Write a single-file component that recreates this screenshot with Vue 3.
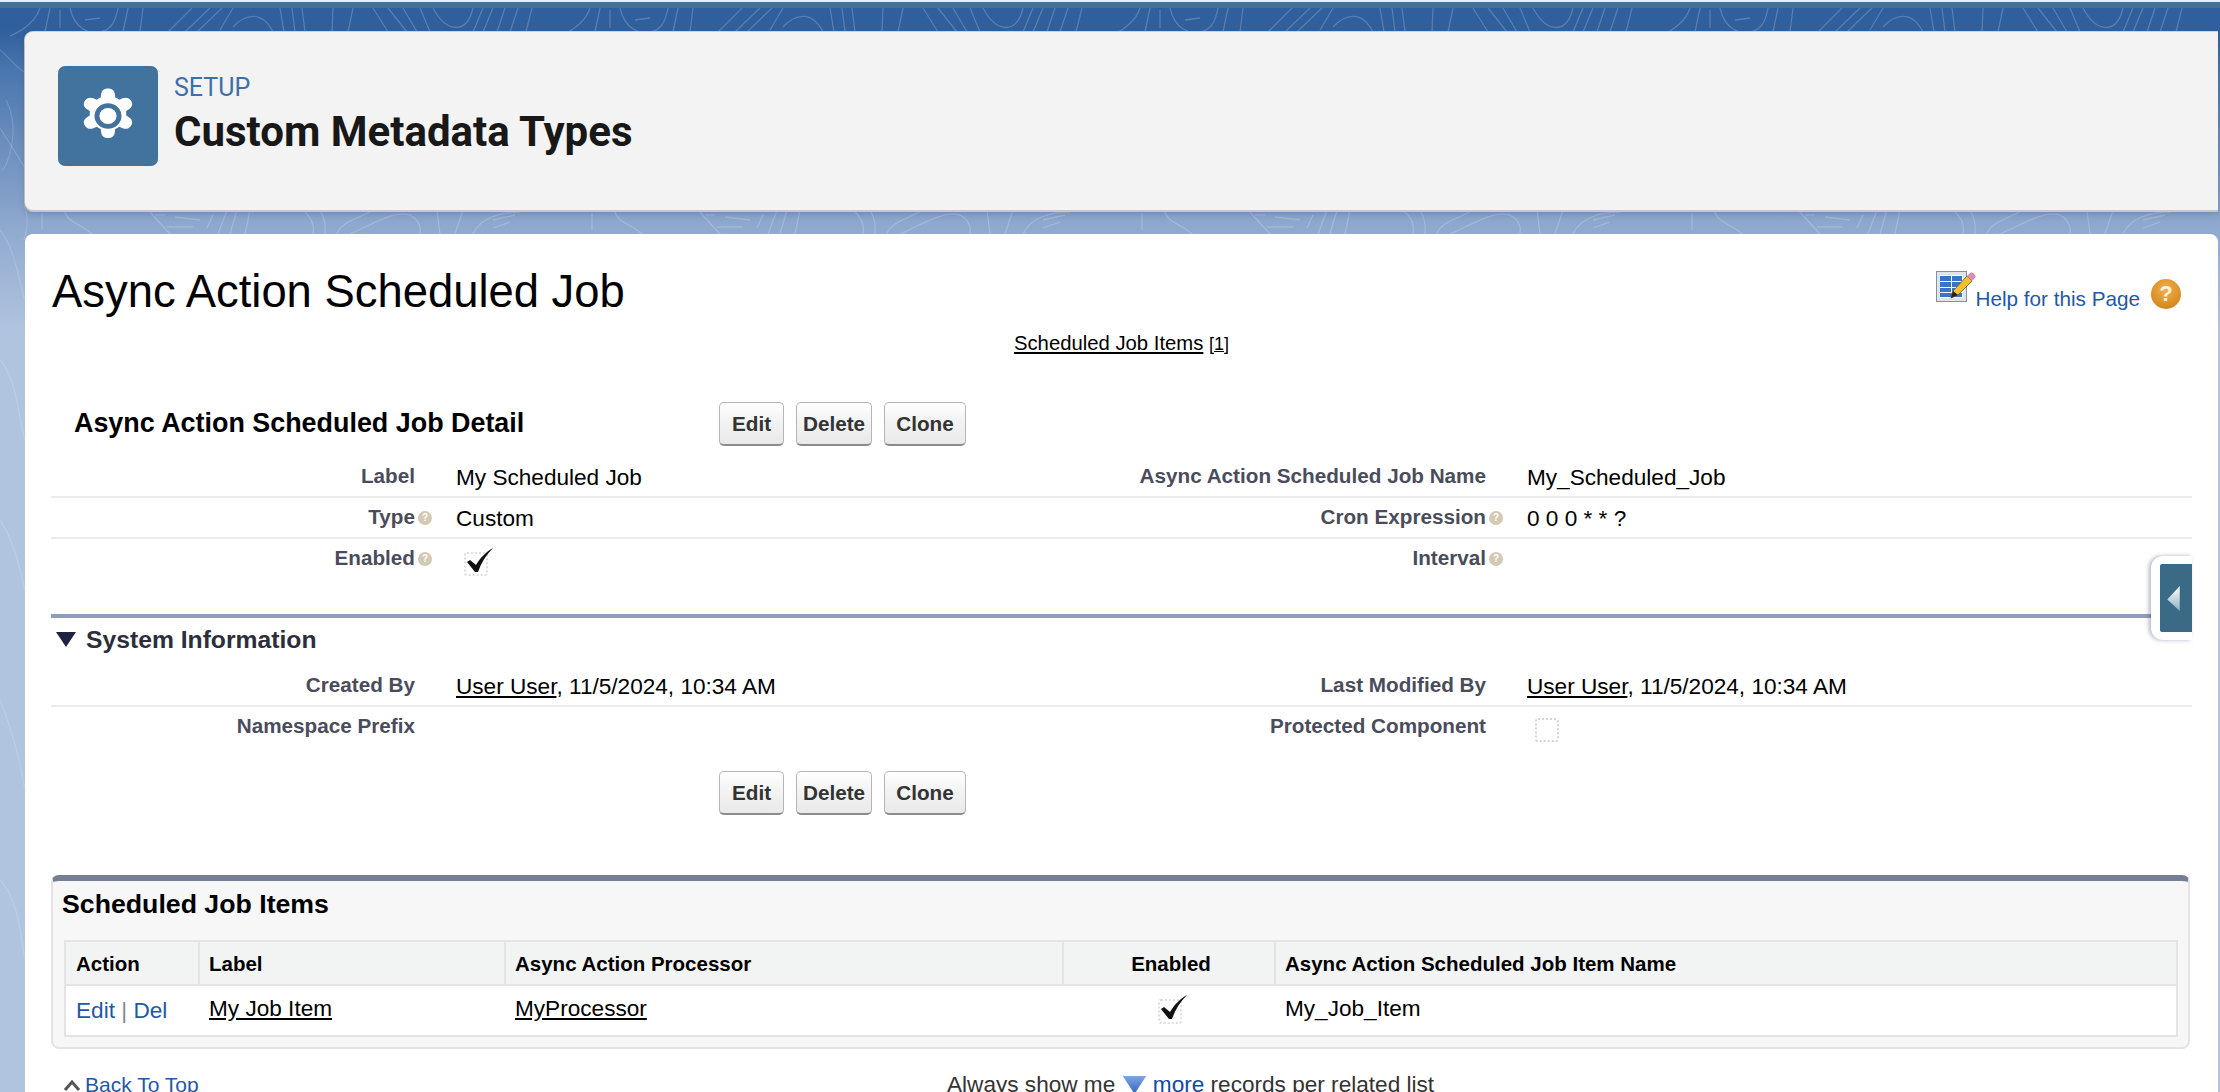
<script setup>
const firstRows = [
  { l: 'Label', v: 'My Scheduled Job', l2: 'Async Action Scheduled Job Name', v2: 'My_Scheduled_Job', line: true },
  { l: 'Type', orb: true, v: 'Custom', l2: 'Cron Expression', orb2: true, v2: '0 0 0 * * ?', line: true },
  { l: 'Enabled', orb: true, check: true, l2: 'Interval', orb2: true, v2: '', tall: true }
]
const tile = [
  'M40 8C36 20 24 30 10 36', 'M50 8L45 32', 'M60 10V28', 'M70 8C75 30 90 34 100 32S115 24 118 8', 'M85 20L100 18', 'M128 8L123 32', 'M143 8L140 32',
  'M192 8L168 32', 'M210 8L185 32', 'M222 8L197 32', 'M233 8L220 30', 'M233 27C245 14 262 10 273 32', 'M280 8L284 32', 'M292 8L295 32', 'M302 8L305 32',
  'M333 8L332 32', 'M353 8L348 32', 'M373 8L388 32', 'M388 8L407 32', 'M403 8L417 32', 'M420 8L430 32', 'M433 8C447 34 467 34 473 8', 'M483 8L473 32', 'M493 8L483 32', 'M505 8L497 32', 'M518 8L510 32', 'M532 8L526 32',
  'M65 212C67 222 83 225 92 234', 'M42 213V230', 'M148 210L170 234', 'M155 215H165', 'M175 217L200 220', 'M167 227H193', 'M213 215L207 228', 'M227 210L218 234', 'M237 210L230 234', 'M250 210L245 234',
  'M303 210C317 222 313 232 313 234', 'M320 210C327 222 325 232 325 234', 'M337 234C340 222 360 218 373 210', 'M350 234C377 222 393 211 410 215C423 222 420 232 420 234', 'M437 210L440 234', 'M463 210L455 234', 'M473 234C480 218 500 212 520 212', 'M493 220L515 215', 'M493 228L510 222'
]
const offsets = [0, 550, 1100, 1650]
const left = ['M0 50C12 60 18 70 25 72', 'M0 128C14 150 20 160 25 168', 'M0 230C16 250 18 280 25 300', 'M0 360C18 380 18 420 25 440', 'M0 520C14 540 20 570 25 590', 'M0 700C12 730 20 760 25 790', 'M0 880C18 900 20 930 25 960', 'M6 100C22 130 6 170 2 170', 'M24 205C30 220 26 232 24 240']
const checkPath = 'M3 17l3-2 6 5C16 13 22 7 29 3 22 10 17 18 14 27h-3z'
</script>

<template>
  <div class="page">
    <svg class="topo" width="2220" height="1092" viewBox="0 0 2220 1092" fill="none" aria-hidden="true">
      <g v-for="o in offsets" :key="o" :transform="`translate(${o} 0)`">
        <path v-for="(d, i) in tile" :key="i" :d="d" stroke="#fff" stroke-opacity=".2" stroke-width="1.3" />
      </g>
      <path v-for="(d, i) in left" :key="i" :d="d" stroke="#fff" stroke-opacity=".15" stroke-width="1.3" />
    </svg>
    <div class="topbar"></div>

    <header class="head">
      <div class="tile">
        <svg width="68" height="64" viewBox="0 0 58 58" preserveAspectRatio="none">
          <path fill="#fff" fill-rule="evenodd" d="M29 4c3.400 0 5.500 1.900 5.800 5l.4 3.300c1.200.4 2.300 1 3.300 1.900l3-1.300c2.900-1.200 5.600-.4 7.200 2.300 1.700 3 1 5.600-1.600 7.400l-2.700 2c.2 1.300.2 2.500 0 3.800l2.700 2c2.600 1.800 3.300 4.400 1.600 7.400-1.600 2.700-4.300 3.500-7.200 2.300l-3-1.300c-1 .9-2.100 1.500-3.300 1.900l-.4 3.300c-.3 3.100-2.400 5-5.800 5s-5.500-1.900-5.800-5l-.4-3.300c-1.200-.4-2.300-1-3.300-1.900l-3 1.300c-2.900 1.200-5.600.4-7.200-2.300-1.700-3-1-5.600 1.600-7.400l2.700-2c-.2-1.300-.2-2.500 0-3.800l-2.700-2c-2.600-1.800-3.300-4.400-1.600-7.400 1.600-2.700 4.300-3.500 7.200-2.300l3 1.300c1-.9 2.100-1.500 3.300-1.900l.4-3.300C23.500 5.900 25.600 4 29 4zM29 17.500a11.500 11.500 0 1 0 0 23 11.500 11.500 0 0 0 0-23z"/>
          <circle cx="29" cy="29" r="7.300" fill="#fff"/>
        </svg>
      </div>
      <div class="head-text">
        <div class="eyebrow">SETUP</div>
        <h1 class="app-title">Custom Metadata Types</h1>
      </div>
    </header>

    <main class="card">
      <div class="page-title-row">
        <h2 class="page-title">Async Action Scheduled Job</h2>
        <div class="help">
          <svg class="help-table" width="40" height="32" viewBox="0 0 40 32">
            <rect x="0.500" y="0.500" width="30" height="30" fill="#dfe3ea" stroke="#8b8f96"/>
            <rect x="4" y="4" width="23" height="23" fill="#fff"/>
            <path fill="#3b73c9" d="M4 5h11v5H4zM16 5h10v5H16zM4 11h11v5H4zM16 11h10v5H16zM4 17h11v4H4zM16 17h10v4H16zM4 22h22v4H4z"/>
            <path fill="#f0c030" stroke="#6b5a10" stroke-width=".8" d="M31 5l5 5-14 14-7 3 2-7z"/>
            <path fill="#d98fb5" d="M31 5l3-3c1-1 2-1 3 0l2 2c1 1 1 2 0 3l-3 3z"/>
            <path fill="#222" d="M17 20l5 4-7 3z"/>
          </svg>
          <a class="blue help-text">Help for this Page</a>
          <span class="help-orb">?</span>
        </div>
      </div>

      <div class="jump"><a class="link">Scheduled Job Items</a> <span class="count">[<u>1</u>]</span></div>

      <div class="detail-head">
        <h3 class="detail-title">Async Action Scheduled Job Detail</h3>
        <div class="btns"><button class="b-edit">Edit</button><button class="b-del">Delete</button><button class="b-clone">Clone</button></div>
      </div>

      <div class="rows-first">
        <div v-for="r in firstRows" :key="r.l" class="row" :class="{ line: r.line, tall: r.tall }">
          <div class="lab">{{ r.l }}<i v-if="r.orb" class="orb">?</i></div>
          <div class="val">
            <span v-if="r.check" class="check"><svg width="32" height="32" viewBox="0 0 32 32"><path fill="#111" :d="checkPath"/></svg></span>
            <template v-else>{{ r.v }}</template>
          </div>
          <div class="lab">{{ r.l2 }}<i v-if="r.orb2" class="orb">?</i></div>
          <div class="val">{{ r.v2 }}</div>
        </div>
      </div>

      <div class="section">
        <svg width="20" height="15" viewBox="0 0 20 15"><path fill="#1f2340" d="M0 0h20L10 15z"/></svg>
        <span>System Information</span>
      </div>

      <div class="row line">
        <div class="lab">Created By</div>
        <div class="val"><a class="link">User User</a>, 11/5/2024, 10:34 AM</div>
        <div class="lab">Last Modified By</div>
        <div class="val"><a class="link">User User</a>, 11/5/2024, 10:34 AM</div>
      </div>
      <div class="row">
        <div class="lab">Namespace Prefix</div>
        <div class="val"></div>
        <div class="lab">Protected Component</div>
        <div class="val"><span class="check empty"></span></div>
      </div>

      <div class="btns bottom"><button class="b-edit">Edit</button><button class="b-del">Delete</button><button class="b-clone">Clone</button></div>

      <section class="related">
        <h3 class="related-title">Scheduled Job Items</h3>
        <div class="tbl">
          <div class="th">Action</div><div class="th th-l">Label</div><div class="th th-l">Async Action Processor</div><div class="th th-c">Enabled</div><div class="th th-l">Async Action Scheduled Job Item Name</div>
          <div class="td"><a class="blue">Edit</a> <span class="pipe">|</span> <a class="blue">Del</a></div>
          <div class="td td-l"><a class="link">My Job Item</a></div>
          <div class="td td-l"><a class="link">MyProcessor</a></div>
          <div class="td td-c"><span class="check small"><svg width="32" height="32" viewBox="0 0 32 32"><path fill="#111" :d="checkPath"/></svg></span></div>
          <div class="td td-l">My_Job_Item</div>
        </div>
      </section>

      <footer class="foot">
        <div class="top-link">
          <svg width="18" height="12" viewBox="0 0 18 12"><path fill="none" stroke="#555" stroke-width="3" d="M2 11l7-8 7 8"/></svg>
          <a class="blue">Back To Top</a>
        </div>
        <div class="always">Always show me <svg width="25" height="18" viewBox="0 0 26 20"><defs><linearGradient id="mg" x1="0" y1="0" x2="0" y2="1"><stop offset="0" stop-color="#7fa6e0"/><stop offset="1" stop-color="#2f66c0"/></linearGradient></defs><path fill="url(#mg)" d="M0 0h26L13 20z"/></svg> <a class="blue dark">more</a> records per related list</div>
      </footer>

      <div class="handle"><div class="handle-in"><svg width="14" height="25" viewBox="0 0 14 26"><defs><linearGradient id="hg" x1="0" y1="0" x2="0" y2="1"><stop offset="0" stop-color="#fff"/><stop offset="1" stop-color="#8fb0c0"/></linearGradient></defs><path fill="url(#hg)" d="M13 0v26L0 14z"/></svg></div></div>
    </main>
  </div>
</template>

<style>
html, body { margin: 0; background: #b0c4df; }
</style>

<style scoped>
.page {
  position: relative;
  height: 1092px;
  overflow: hidden;
  padding: 32px 2px 0 25px;
  box-sizing: border-box;
  background: linear-gradient(180deg, #2f5f9d 0, #2f5f9d 30px, #4a76ae 70px, #8ea8ce 225px, #b0c4df 330px);
  font-family: "Liberation Sans", Arial, sans-serif;
  font-size: 20.7px;
  color: #000;
}
.topo { position: absolute; left: 0; top: 0; }
.topbar { position: absolute; left: 0; right: 0; top: 2px; height: 6px; background: #3f7199; }
.page::before { content: ""; position: absolute; left: 0; right: 0; top: 0; height: 2px; background: #e9edf2; }

.head {
  position: relative;
  display: flex;
  align-items: flex-start;
  gap: 16px;
  height: 178px;
  padding: 34px 33px 0;
  box-sizing: border-box;
  background: #f3f3f3;
  border-radius: 8px 0 0 8px;
  box-shadow: 0 -1px 0 #cfd2d6, 0 2px 0 #c4c7cb, 0 4px 6px rgba(40,60,90,.25), -1px 0 0 #cfd2d6;
}
.tile {
  width: 100px;
  height: 100px;
  border-radius: 7px;
  background: #41739e;
  display: flex;
  align-items: center;
  justify-content: center;
}
.head-text { padding-top: 5px; }
.eyebrow { font-family: Roboto, sans-serif; font-size: 25px; line-height: 34px; color: #3e70a8; }
.app-title { margin: 2px 0 0; font-family: Roboto, sans-serif; font-weight: 700; font-size: 42px; line-height: 50px; color: #181818; white-space: nowrap; }

.card {
  position: relative;
  margin-top: 24px;
  height: 858px;
  padding: 32px 26px 0 26px;
  box-sizing: border-box;
  background: #fff;
  border-radius: 8px 8px 0 0;
  overflow: hidden;
}
.page-title-row { display: flex; justify-content: space-between; align-items: flex-start; height: 64px; }
.page-title { margin: 0 0 0 1px; font-weight: 400; font-size: 45.4px; line-height: 52px; }
.help { display: flex; align-items: flex-start; padding: 5px 11px 0 0; height: 37px; }
.help-text { line-height: 24px; margin-top: 16px; }
.blue { color: #1f58a8; }
.blue.dark { color: #0f4aa8; }
.help-orb {
  display: inline-flex; align-items: center; justify-content: center;
  width: 30px; height: 30px; margin: 8px 0 0 11px; border-radius: 50%;
  background: radial-gradient(circle at 50% 35%, #f0b050, #d98a22 70%, #b87418);
  color: #fff3dc; font-weight: 700; font-size: 22px;
}
.jump { text-align: center; height: 30px; line-height: 30px; margin-top: -2px; font-size: 20.3px; }
.count { font-size: 18px; }
.link { color: #000; text-decoration: underline; }
.detail-head { display: flex; align-items: center; height: 44px; margin-top: 44px; }
.detail-title { margin: 0; width: 668px; padding-left: 23px; box-sizing: border-box; font-size: 26.9px; line-height: 42px; font-weight: 700; align-self: flex-start; }
.btns { display: flex; gap: 12px; }
button {
  height: 44px; padding: 0; box-sizing: border-box;
  font: 700 20.7px "Liberation Sans", Arial, sans-serif; color: #333;
  border: 1.500px solid #b5b5b5; border-bottom: 2px solid #8c8c8c; border-radius: 5px;
  background: linear-gradient(180deg, #fff, #f4f4f4 40%, #e9e9e9);
}
.b-edit { width: 65px; }
.b-del { width: 76px; }
.b-clone { width: 82px; }
.rows-first { margin-top: 11px; }
.row {
  display: grid;
  grid-template-columns: 364px 716px 355px 1fr;
  height: 41px;
  line-height: 41px;
  box-sizing: border-box;
}
.row.tall { height: 75px; }
.row.line { border-bottom: 2px solid #ececec; }
.lab { position: relative; text-align: right; font-weight: 700; color: #4a4c5c; line-height: 38px; }
.val { padding-left: 41px; white-space: nowrap; font-size: 22.6px; }
.orb {
  position: absolute; left: 100%; top: 13px; width: 14px; height: 14px; margin-left: 3px; border-radius: 50%;
  background: #d4c9b2; color: #fff; font: 700 10px/14px "Liberation Sans", sans-serif; text-align: center;
}
.check { display: inline-block; position: relative; width: 24px; height: 24px; margin: 13px 0 0 8px; box-sizing: border-box; border: 2px dotted #dedede; border-radius: 3px; vertical-align: top; }
.check svg { position: absolute; left: -2px; top: -9px; }
.check.empty { border-color: #d4d4d4; margin-top: 11px; }
.section {
  display: flex; align-items: flex-start; gap: 10px; height: 52px; padding-left: 5px; box-sizing: border-box;
  border-top: 4px solid #8e9dbd; font-weight: 700; font-size: 24.7px; line-height: 44px; color: #2c2e3c;
}
.section svg { margin-top: 14px; }
.bottom { padding-left: 668px; margin-top: 23px; }
.related {
  margin: 60px 2px 0 0; height: 174px; box-sizing: border-box;
  background: #f7f7f7; border: 2px solid #e4e4e4; border-top: 6px solid #767e96; border-radius: 8px;
  padding: 0 10px 0 11px;
}
.related-title { margin: 0 0 0 -2px; height: 59px; line-height: 46px; font-size: 26.7px; font-weight: 700; }
.tbl {
  display: grid;
  grid-template-columns: 134px 306px 558px 212px 1fr;
  grid-template-rows: 44px 49px;
  border: 2px solid #e4e4e4;
  background: #fff;
}
.th { background: #f2f3f3; border-bottom: 2px solid #e4e4e4; font-weight: 700; line-height: 43px; padding-left: 10px; border-right: 2px solid #e4e4e4; font-size: 20.5px; }
.th:nth-child(5) { border-right: 0; }
.th-l { padding-left: 9px; }
.th-c { padding: 0 0 0 4px; text-align: center; }
.td { font-size: 22.6px; line-height: 49px; padding-left: 10px; white-space: nowrap; }
.td-l { padding-left: 9px; line-height: 46px; }
.td-c { padding: 0; text-align: center; }
.pipe { color: #888; }
.check.small { margin: 13px 0 0; height: 25px; }
.foot { display: flex; margin-top: 21px; height: 40px; line-height: 30px; color: #333; }
.top-link { width: 896px; padding-left: 12px; box-sizing: border-box; display: flex; align-items: center; gap: 4px; height: 30px; font-size: 21px; flex: none; }
.always { white-space: nowrap; font-size: 22.6px; }
.always svg { vertical-align: -2px; }
.handle {
  position: absolute; left: 2126px; top: 322px; width: 41px; height: 84px; box-sizing: border-box; padding: 8px 0 8px 9px;
  background: #fff; border-radius: 12px 0 0 12px; box-shadow: -2px 0 4px rgba(60,70,100,.4);
}
.handle-in { width: 32px; height: 68px; background: #3a6a85; border-radius: 2px 0 0 2px; display: flex; align-items: center; padding-left: 7px; box-sizing: border-box; }
</style>
